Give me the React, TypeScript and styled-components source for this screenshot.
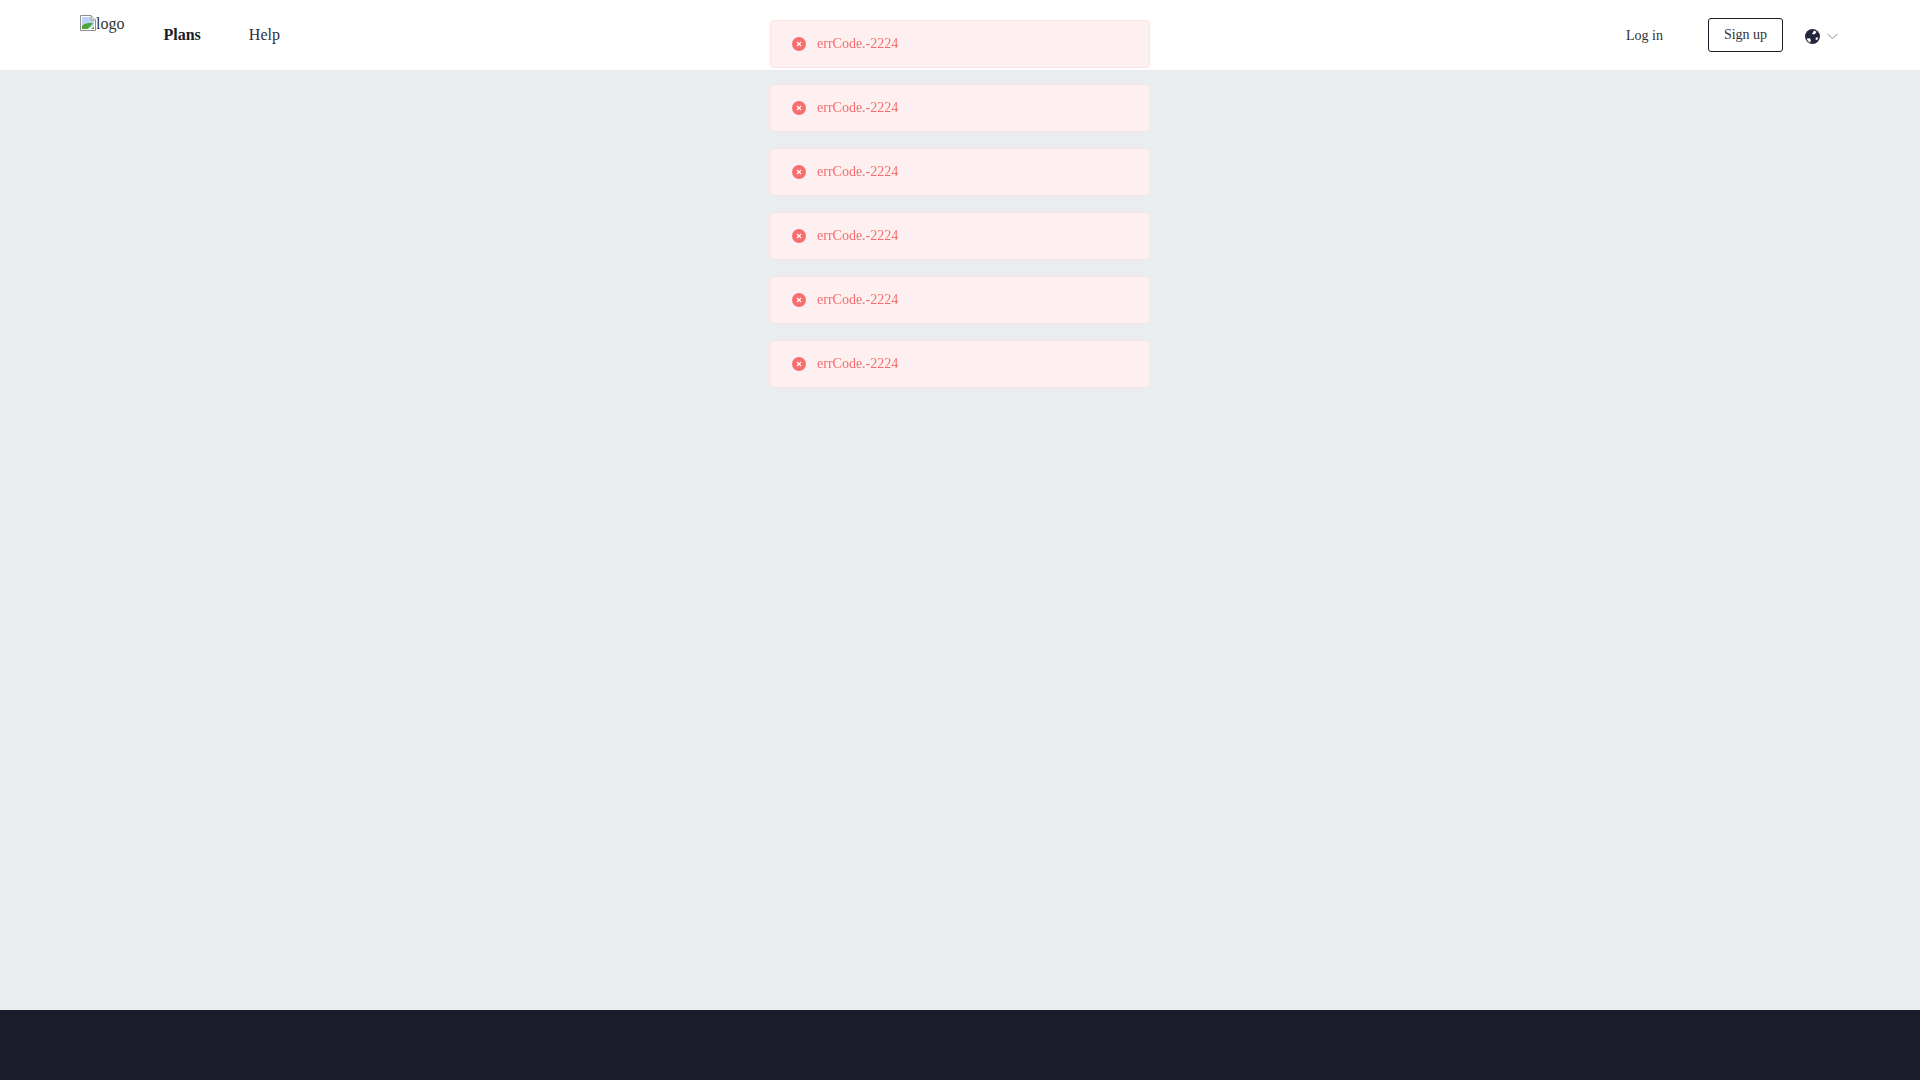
import React from "react";
import styled, { createGlobalStyle } from "styled-components";

const GlobalStyle = createGlobalStyle`
  html, body {
    margin: 0;
    padding: 0;
    height: 100%;
  }
  body {
    font-family: "Liberation Serif", "Times New Roman", serif;
    color: #303133;
  }
`;

const Page = styled.div`
  display: flex;
  flex-direction: column;
  height: 1080px;
  overflow: hidden;
  background-color: #e9edf0;
`;

const Header = styled.header`
  display: flex;
  align-items: stretch;
  justify-content: space-between;
  height: 70px;
  flex-shrink: 0;
  padding: 0 82px 0 80px;
  background-color: #fff;
`;

const HeaderLeft = styled.div`
  display: flex;
  align-items: center;
`;

const HeaderRight = styled.div`
  display: flex;
  align-items: center;
`;

const Logo = styled.div`
  display: flex;
  align-items: flex-start;
  align-self: flex-start;
  width: 83.5px;
  height: 40px;
  margin-top: 15px;
  font-size: 16px;
  line-height: 18px;
  color: #303133;
`;

const NavLink = styled.a<{ $active?: boolean }>`
  margin-right: 48px;
  font-size: 16px;
  font-weight: ${(p) => (p.$active ? 700 : 400)};
  color: ${(p) => (p.$active ? "#1c1c2a" : "#303133")};
`;

const LoginLink = styled.a`
  margin: 1px 45px 0 0;
  font-size: 14px;
  color: #303133;
`;

const SignUpButton = styled.button`
  width: 75px;
  height: 34px;
  padding: 0 0 1px;
  border: 1px solid #1c1c2a;
  border-radius: 3px;
  background-color: #fff;
  font-family: inherit;
  font-size: 14px;
  color: #303133;
`;

const LangSwitch = styled.div`
  display: flex;
  align-items: center;
  gap: 7px;
  margin: 2px 0 0 22px;
`;

const Main = styled.main`
  flex: 1;
`;

const Footer = styled.footer`
  height: 70px;
  flex-shrink: 0;
  background-color: #1c1c2c;
`;

const MessageStack = styled.div`
  position: fixed;
  top: 20px;
  left: 770px;
  display: flex;
  flex-direction: column;
  gap: 16px;
  width: 380px;
`;

const Message = styled.div`
  display: flex;
  align-items: center;
  box-sizing: border-box;
  height: 48px;
  padding: 0 21px;
  border: 1px solid #fde2e2;
  border-radius: 4px;
  background-color: #fef0f0;
  font-size: 14px;
  color: #f56c6c;
`;

const MessageText = styled.span`
  margin-left: 11px;
`;

const BrokenImage = () => (
  <svg width="16" height="16" viewBox="0 0 16 16" style={{ flexShrink: 0 }}>
    <path d="M0.5 0.5H11L15.5 5V15.5H0.5Z" fill="#fff" stroke="#8f8f8f" />
    <path d="M2 2H10.5V5.5H14V10L9 14H2Z" fill="#bcd3f7" />
    <path d="M2 14V11C5 8 9 7.5 13 8.5L7.5 14Z" fill="#4ea52f" />
    <path d="M11 14L14 11.5V14Z" fill="#4ea52f" />
    <path d="M11 0.5V5H15.5" fill="#e8e8e8" stroke="#8f8f8f" />
  </svg>
);

const ErrorIcon = () => (
  <svg width="14" height="14" viewBox="0 0 14 14">
    <circle cx="7" cy="7" r="7" fill="#f76e6e" />
    <path d="M5 5L9 9M9 5L5 9" stroke="#fff" strokeWidth="1.1" />
  </svg>
);

const GlobeIcon = () => (
  <svg width="15" height="15" viewBox="0 0 15 15">
    <circle cx="7.5" cy="7.5" r="7.5" fill="#22263a" />
    <path d="M1.8 9.4L4.8 9.2L6 11.2L5 13.6C3.4 12.9 2.3 11.4 1.8 9.4Z" fill="#fff" />
    <path d="M8.8 1.6L11.6 2.8L10.2 4.8L8.2 5.6L7 4.6L8.2 3.2Z" fill="#fff" />
    <path d="M11 8.6L13.4 8.4L12 11.2L10.4 10.2Z" fill="#fff" />
  </svg>
);

const ChevronIcon = () => (
  <svg width="11" height="7" viewBox="0 0 11 7">
    <path d="M0.5 0.8L5.5 5.8L10.5 0.8" fill="none" stroke="#8d9199" strokeWidth="1" />
  </svg>
);

const App: React.FC = () => {
  const messages = [1, 2, 3, 4, 5, 6];

  return (
    <Page>
      <GlobalStyle />
      <Header>
        <HeaderLeft>
          <Logo>
            <BrokenImage />
            logo
          </Logo>
          <NavLink $active>Plans</NavLink>
          <NavLink>Help</NavLink>
        </HeaderLeft>
        <HeaderRight>
          <LoginLink>Log in</LoginLink>
          <SignUpButton>Sign up</SignUpButton>
          <LangSwitch>
            <GlobeIcon />
            <ChevronIcon />
          </LangSwitch>
        </HeaderRight>
      </Header>
      <Main />
      <Footer />
      <MessageStack>
        {messages.map((id) => (
          <Message key={id}>
            <ErrorIcon />
            <MessageText>errCode.-2224</MessageText>
          </Message>
        ))}
      </MessageStack>
    </Page>
  );
};

export default App;
